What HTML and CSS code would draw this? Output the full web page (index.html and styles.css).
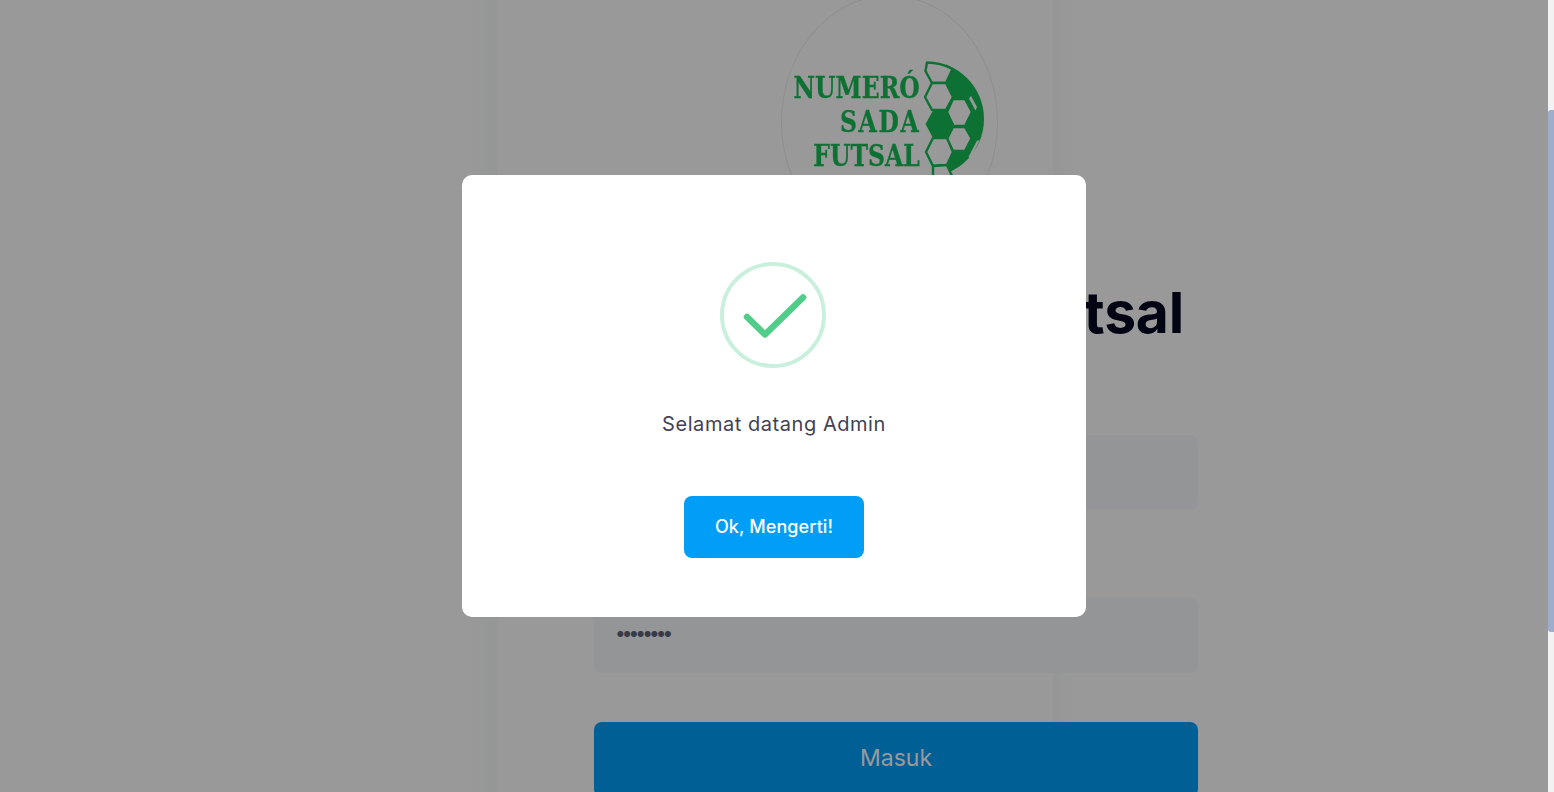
FILE: index.html
```html
<!DOCTYPE html>
<html lang="id">
<head>
<meta charset="utf-8">
<title>Numero Sada Futsal</title>
<link rel="stylesheet" href="styles.css">
</head>
<body>
<div class="app">
  <main class="stage">
    <div class="page">
      <section class="panel">
        <div class="logo">
          <div class="logo-words">
            <span>NUMERÓ</span>
            <span class="word-wide">SADA</span>
            <span>FUTSAL</span>
          </div>
          <svg class="ball" viewBox="920 58 70 122" aria-hidden="true">
            <defs>
              <clipPath id="ballclip"><rect x="946" y="58" width="44" height="122"/></clipPath>
            </defs>
            <circle cx="926" cy="119" r="58" fill="#17bd58" clip-path="url(#ballclip)"/>
            <g fill="#fff" stroke="#17bd58" stroke-width="2.400" stroke-linejoin="round">
              <path d="M927 62.500C936 62.500 945 65 952.500 69L946 83H932L925.500 71Z"/>
              <path d="M932 83H946L953 97L946 110H932L925 97Z"/>
              <path d="M953 99H965L972 112L965 126H953L947 112Z"/>
              <path d="M953 127H965L971.500 138.500L965 151H953L947 139Z"/>
              <path d="M933 138H947L953 152L947 165L933 166L926 152Z"/>
              <path d="M933 166L947 165L952 176L950 182H928L933 176Z"/>
            </g>
            <path fill="#17bd58" d="M933 110.500H947L954 124L947 138H933L925.500 124Z"/>
            <path fill="#fff" d="M969 98.500L971 96L977 107L975.500 110.500Z"/>
            <path fill="#fff" d="M968.500 157L977 140.500H979.500L971 158.500Z"/>
          </svg>
        </div>
        <h1 class="title">Numero Sada Futsal</h1>
        <form class="form">
          <label class="label">Username</label>
          <div class="input"></div>
          <label class="label label-next">Password</label>
          <div class="input input-pass">••••••••</div>
          <button class="submit" type="button">Masuk</button>
        </form>
      </section>
    </div>
    <div class="overlay">
      <div class="modal">
        <svg class="success" viewBox="0 0 106 106" aria-hidden="true">
          <circle cx="53" cy="53" r="51" fill="none" stroke="#c9f0dc" stroke-width="4"/>
          <path d="M27 55L45 72.500L83 35.500" fill="none" stroke="#50cd89" stroke-width="6.500" stroke-linecap="round" stroke-linejoin="round"/>
        </svg>
        <p class="message">Selamat datang Admin</p>
        <button class="confirm" type="button">Ok, Mengerti!</button>
      </div>
    </div>
  </main>
  <div class="rail"><div class="thumb"></div></div>
</div>
</body>
</html>
```
FILE: styles.css
```css
* { box-sizing: border-box; }
html, body { margin: 0; height: 100%; overflow: hidden; }
body { font-family: "Inter", "Noto Sans", sans-serif; background: #fff; }

.app { display: flex; width: 1554px; height: 792px; overflow: hidden; }
.stage { position: relative; flex: 1; overflow: hidden; }

.page {
  height: 100%;
  padding-left: 594px;
  background: linear-gradient(to right, #fff 470px, #f9fafb 497px, #fff 498px, #fff 1052px, #f9fafb 1053px, #fff 1075px);
}
.panel { width: 604px; display: flex; flex-direction: column; }

.logo {
  width: 217px; height: 254px; flex: none;
  margin: -5px 0 0 187px;
  border: 1px solid #ededed; border-radius: 50%;
  display: flex; align-items: flex-start;
  filter: blur(.4px);
}
.logo-words {
  width: 138px; flex: none; padding-top: 75px;
  display: flex; flex-direction: column; align-items: flex-end;
  font-family: "DejaVu Serif", serif; font-weight: 700; color: #17bd58;
  font-size: 30px; line-height: 34px;
}
.logo-words span { display: block; transform: scaleX(.785); transform-origin: right center; white-space: nowrap; -webkit-text-stroke: .3px #17bd58; }
.logo-words .word-wide { letter-spacing: 2px; }
.ball { width: 70px; height: 122px; flex: none; margin-top: 62px; }

.title {
  margin: 28px 0 0; flex: none; text-align: right; padding-right: 14px;
  font-size: 57px; line-height: 72px; font-weight: 700; color: #050820;
  white-space: nowrap; letter-spacing: -.2px;
}

.form { margin-top: 52px; display: flex; flex-direction: column; flex: none; }
.label { height: 34px; flex: none; font-size: 16px; color: #3f4254; }
.label-next { margin-top: 54px; }
.input { height: 75px; flex: none; background: #f5f8fa; border-radius: 8px; padding: 0 21px; color: #5e6278; font-size: 19px; line-height: 72px; letter-spacing: -3.9px; }
.submit { margin-top: 49px; height: 75px; flex: none; border: 0; border-radius: 8px; background: #009ef7; color: #fff; font: 400 23px "Inter", sans-serif; padding-bottom: 5px; }

.overlay { position: absolute; inset: 0; background: rgba(0, 0, 0, .4); display: flex; align-items: center; justify-content: center; }
.modal { width: 624px; height: 442px; background: #fff; border-radius: 10px; display: flex; flex-direction: column; align-items: center; padding-top: 87px; }
.success { width: 106px; height: 106px; flex: none; margin-right: 2px; }
.message { margin: 42px 0 0; font-size: 20px; line-height: 28px; color: #3f4254; letter-spacing: .55px; }
.confirm { margin-top: 58px; width: 180px; height: 62px; border: 0; border-radius: 8px; background: #009ef7; color: #fff; font: 500 18px "Inter", sans-serif; padding-bottom: 2px; letter-spacing: .1px; }

.rail { width: 6px; flex: none; background: #f2f2f2; padding-top: 110px; }
.thumb { height: 522px; background: #9eadcb; border-radius: 3px 0 0 3px; }
```
